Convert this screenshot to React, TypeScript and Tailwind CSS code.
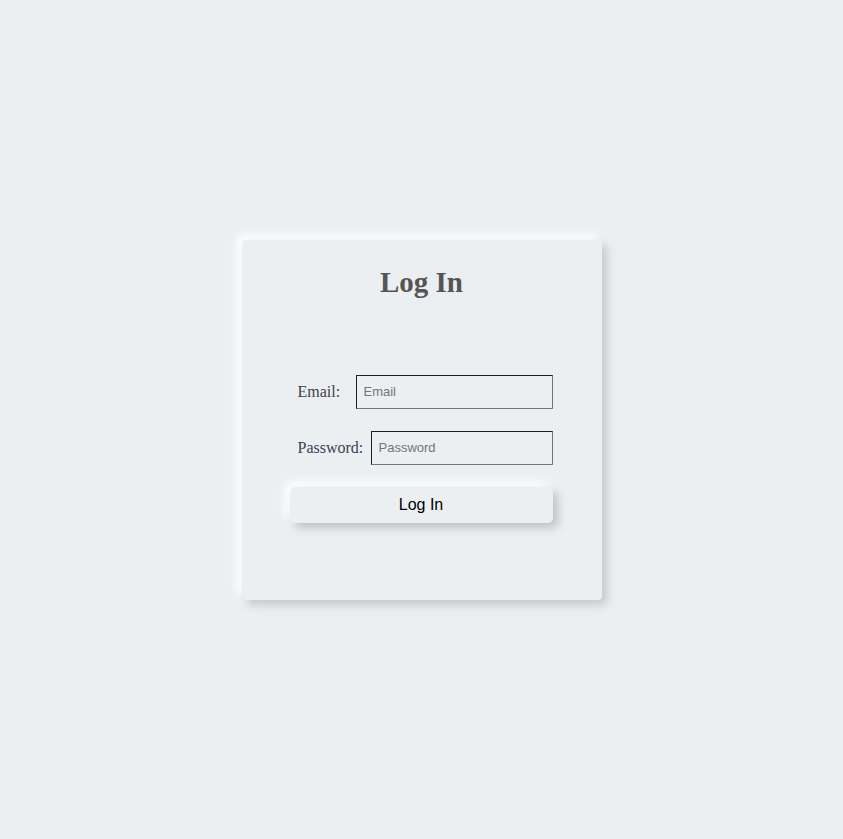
import React from "react";

export default function App() {
  return (
    <div className="min-h-screen w-full bg-[#eceff2] flex items-center justify-center">
      <div className="w-[360px] h-[360px] bg-[#eceff2] rounded-[4px] shadow-[5px_5px_10px_#c5c7cc,-5px_-5px_10px_#ffffff] flex flex-col pt-[26px]">
        <h1 className="text-center text-[29px] leading-[33px] font-bold text-[#555555] font-['Liberation_Serif','Times_New_Roman',serif]">
          Log In
        </h1>
        <form className="mt-[76px] pl-[48px] flex flex-col" onSubmit={(e) => e.preventDefault()}>
          <div className="ml-[8px] w-[255px] h-[34px] flex items-center">
            <label className="w-[58px] shrink-0 text-[16px] text-[#3a4250] font-['Liberation_Serif','Times_New_Roman',serif]">
              Email:
            </label>
            <input
              type="email"
              placeholder="Email"
              className="flex-1 min-w-0 h-[34px] bg-transparent border border-t-[#1f1f1f] border-l-[#1f1f1f] border-b-[#767676] border-r-[#767676] px-[7px] text-[13px] text-black placeholder:text-[#757575] outline-none font-['Liberation_Sans',Arial,sans-serif]"
            />
          </div>
          <div className="mt-[22px] ml-[8px] w-[255px] h-[34px] flex items-center">
            <label className="w-[73px] shrink-0 text-[16px] text-[#3a4250] font-['Liberation_Serif','Times_New_Roman',serif]">
              Password:
            </label>
            <input
              type="password"
              placeholder="Password"
              className="flex-1 min-w-0 h-[34px] bg-transparent border border-t-[#1f1f1f] border-l-[#1f1f1f] border-b-[#767676] border-r-[#767676] px-[7px] text-[13px] text-black placeholder:text-[#757575] outline-none font-['Liberation_Sans',Arial,sans-serif]"
            />
          </div>
          <button
            type="submit"
            className="mt-[22px] w-[263px] h-[36px] rounded-[5px] bg-[#eceff2] text-[16px] leading-[36px] text-black shadow-[5px_5px_10px_#bfc1c6,-5px_-5px_10px_#ffffff] font-['Liberation_Sans',Arial,sans-serif]"
          >
            Log In
          </button>
        </form>
      </div>
    </div>
  );
}
